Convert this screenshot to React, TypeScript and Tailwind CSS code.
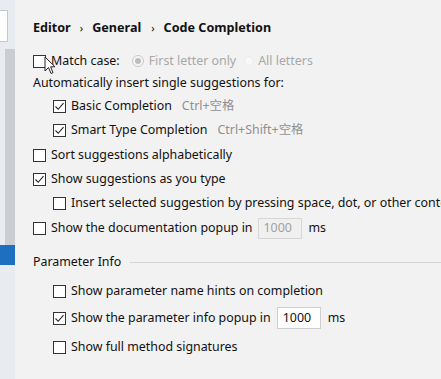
import React from "react";

const Check = ({ checked }: { checked?: boolean }) => (
  <span className="w-[13px] h-[13px] border border-[#333] bg-white flex items-center justify-center shrink-0">
    {checked && (
      <svg width="11" height="11" viewBox="0 0 11 11">
        <path d="M1.5 5.5 L4.2 8.3 L9.5 2.2" fill="none" stroke="#222" strokeWidth="1.1" />
      </svg>
    )}
  </span>
);

const Row = ({
  checked,
  indent,
  h,
  children,
}: {
  checked?: boolean;
  indent?: boolean;
  h: string;
  children: React.ReactNode;
}) => (
  <div className={`flex items-center whitespace-nowrap ${h} ${indent ? "pl-[20px]" : ""}`}>
    <Check checked={checked} />
    <span className="ml-[5px] flex items-center">{children}</span>
  </div>
);

export default function App() {
  return (
    <div
      className="w-[441px] h-[379px] flex overflow-hidden bg-[#f2f2f2] text-[12.4px] text-[#111] relative"
      style={{ fontFamily: '"Noto Sans", "Noto Sans CJK SC", sans-serif' }}
    >
      <div className="w-[15px] shrink-0 bg-[#e8ecf1] flex flex-col">
        <div className="h-[10px]" />
        <div className="h-[32px] w-[8px] bg-white border border-[#c4c7cc] border-l-0" />
        <div className="h-[7px]" />
        <div className="flex-none h-[196px] flex justify-end">
          <div className="w-[10px] bg-[#cacdd2]" />
        </div>
        <div className="h-[20px] bg-[#1f6fc0]" />
      </div>
      <div className="flex-1 min-w-0 pl-[18px] overflow-hidden">
        <div className="pt-[7px] h-[49px] font-bold text-[12.6px] flex items-center text-[#111] whitespace-nowrap">
          <span>Editor</span>
          <span className="ml-[9px] mr-[9px] text-[11px] font-normal">›</span>
          <span>General</span>
          <span className="ml-[10px] mr-[9px] text-[11px] font-normal">›</span>
          <span>Code Completion</span>
        </div>
        <div className="flex items-center h-[24px] whitespace-nowrap">
          <Check />
          <span className="ml-[5px]">Match case:</span>
          <span className="ml-[12px] w-[12px] h-[12px] rounded-full border border-[#c8c8c8] bg-[#f6f6f6] flex items-center justify-center">
            <span className="w-[6px] h-[6px] rounded-full bg-[#bdbdbd]" />
          </span>
          <span className="ml-[5px] text-[#a8a8a8]">First letter only</span>
          <span className="ml-[8px] w-[10px] h-[10px] rounded-full border border-[#ececec] bg-[#f8f8f8]" />
          <span className="ml-[4px] text-[#a8a8a8]">All letters</span>
        </div>
        <div className="h-[21px] flex items-center whitespace-nowrap">
          Automatically insert single suggestions for:
        </div>
        <Row checked indent h="h-[24px]">
          Basic Completion<span className="ml-[10px] text-[#909090]">Ctrl+空格</span>
        </Row>
        <Row checked indent h="h-[25px]">
          Smart Type Completion<span className="ml-[10px] text-[#909090]">Ctrl+Shift+空格</span>
        </Row>
        <Row h="h-[24px]">Sort suggestions alphabetically</Row>
        <Row checked h="h-[24px]">Show suggestions as you type</Row>
        <Row indent h="h-[24px]">
          Insert selected suggestion by pressing space, dot, or other context-dependent keys
        </Row>
        <div className="flex items-center h-[26px] whitespace-nowrap">
          <Check />
          <span className="ml-[5px]">Show the documentation popup in</span>
          <span className="ml-[5px] w-[44px] h-[21px] border border-[#d6d6d6] bg-[#f0f0f0] text-[#a0a0a0] flex items-center pl-[5px]">
            1000
          </span>
          <span className="ml-[7px]">ms</span>
        </div>
        <div className="h-[11px]" />
        <div className="flex items-center h-[20px] whitespace-nowrap">
          <span>Parameter Info</span>
          <span className="ml-[9px] flex-1 h-px bg-[#d4d4d4]" />
        </div>
        <div className="h-[7px]" />
        <Row indent h="h-[24px]">Show parameter name hints on completion</Row>
        <div className="flex items-center h-[30px] whitespace-nowrap pl-[20px]">
          <Check checked />
          <span className="ml-[5px]">Show the parameter info popup in</span>
          <span className="ml-[6px] w-[44px] h-[22px] border border-[#cfcfcf] bg-white text-[#111] flex items-center pl-[5px]">
            1000
          </span>
          <span className="ml-[7px]">ms</span>
        </div>
        <Row indent h="h-[28px]">Show full method signatures</Row>
      </div>
      <svg className="absolute left-[44px] top-[56px]" width="12" height="19" viewBox="0 0 12 19">
        <path d="M1 1 L1 15 L4.5 11.5 L7 17.5 L9 16.6 L6.6 10.8 L11 10.8 Z" fill="white" stroke="#222" strokeWidth="1" strokeLinejoin="round" />
      </svg>
    </div>
  );
}
